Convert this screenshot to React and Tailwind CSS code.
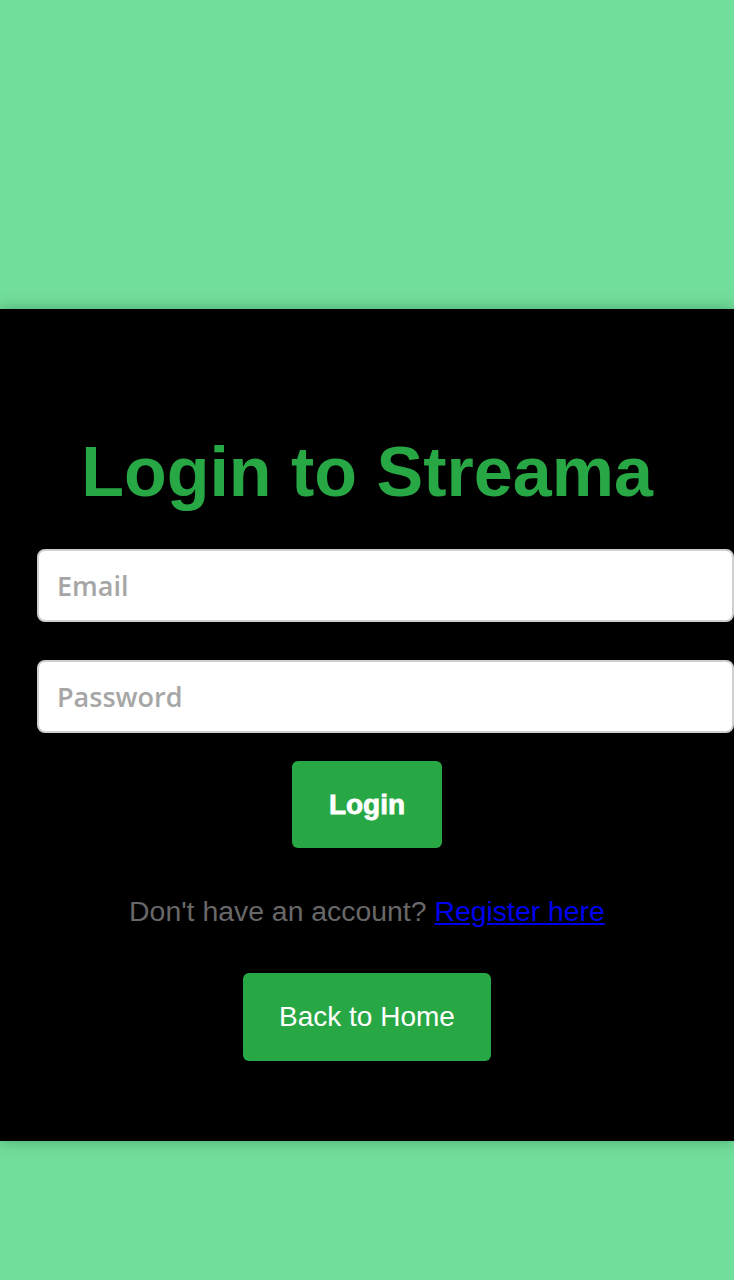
export default function App() {
  return (
    <div className="min-h-[1280px] bg-[#72de9c] pt-[309px] font-['Liberation_Sans',Arial,sans-serif]">
      <div className="flex flex-col bg-black pt-[123px] pb-[80px] overflow-hidden shadow-[0_0_14px_rgba(0,60,20,0.35)]">
        <h1 className="text-center text-[70px] leading-[80px] font-bold text-[#28a745]">
          Login to Streama
        </h1>
        <form className="flex flex-col mt-[37px]" onSubmit={e => e.preventDefault()}>
          <input
            type="email"
            placeholder="Email"
            className="ml-[37px] w-[697px] h-[73px] shrink-0 rounded-lg border-2 border-[#cfcfcf] bg-white px-[18px] text-[27px] font-semibold font-['Open_Sans',sans-serif] placeholder:text-[#a6a6a6] outline-none"
          />
          <input
            type="password"
            placeholder="Password"
            className="ml-[37px] mt-[38px] w-[697px] h-[73px] shrink-0 rounded-lg border-2 border-[#cfcfcf] bg-white px-[18px] text-[27px] font-semibold font-['Open_Sans',sans-serif] placeholder:text-[#a6a6a6] outline-none"
          />
          <button
            type="submit"
            className="self-center mt-[28px] w-[150px] h-[87px] rounded-md bg-[#28a745] text-white text-[28px] font-bold [-webkit-text-stroke:0.8px_white]"
          >
            Login
          </button>
        </form>
        <p className="mt-[47px] text-center text-[28.4px] leading-[32px] text-[#686868]">
          Don't have an account?{' '}
          <a href="#" className="text-[#0000ee] underline">Register here</a>
        </p>
        <button className="self-center mt-[46px] w-[248px] h-[88px] rounded-md bg-[#28a745] text-white text-[28px]">
          Back to Home
        </button>
      </div>
    </div>
  )
}
